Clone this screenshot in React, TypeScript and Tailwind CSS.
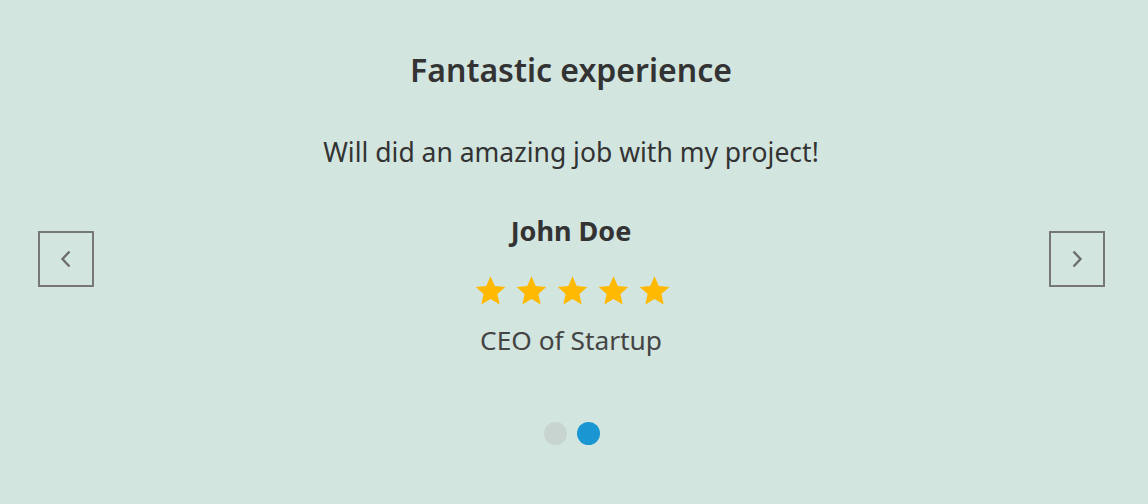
import React from "react";

const Star = () => (
  <svg width="33" height="33" viewBox="0 0 24 24" aria-hidden="true">
    <path
      fill="#ffb900"
      d="M12 1.6l3.1 7.1 7.7.7-5.8 5.1 1.7 7.6L12 18.1l-6.7 4 1.7-7.6-5.8-5.1 7.7-.7z"
    />
  </svg>
);

const NavButton = ({ dir }: { dir: "prev" | "next" }) => (
  <button
    type="button"
    aria-label={dir === "prev" ? "Previous" : "Next"}
    className="flex h-[56px] w-[56px] items-center justify-center border-2 border-[#777] bg-transparent"
  >
    <svg width="12" height="20" viewBox="0 0 12 20" fill="none" stroke="#6e6e6e" strokeWidth="2.4">
      {dir === "prev" ? <path d="M9.5 2.5 L2.5 10 L9.5 17.5" /> : <path d="M2.5 2.5 L9.5 10 L2.5 17.5" />}
    </svg>
  </button>
);

export default function App() {
  return (
    <div
      className="flex h-[504px] w-full items-center bg-[#d2e5df] text-[#333]"
      style={{ fontFamily: '"Noto Sans", "Open Sans", sans-serif' }}
    >
      <div className="flex w-[128px] justify-start pl-[38px] pt-[14px]">
        <NavButton dir="prev" />
      </div>
      <div className="flex flex-1 flex-col items-center self-stretch pt-[44px]">
        <h2 className="text-[32px] font-semibold leading-[52px]">Fantastic experience</h2>
        <p className="mt-[38px] text-[26.5px] leading-[36px]">Will did an amazing job with my project!</p>
        <p className="mt-[43px] text-[27px] font-bold leading-[36px]">John Doe</p>
        <div className="mt-[25px] flex gap-[8px] pl-[2px]">
          <Star />
          <Star />
          <Star />
          <Star />
          <Star />
        </div>
        <p className="mt-[15px] text-[26.3px] leading-[36px] text-[#444]">CEO of Startup</p>
        <div className="mt-[64px] flex gap-[10px] pl-[2px]">
          <span className="h-[23px] w-[23px] rounded-full bg-[#c8d4d0]" />
          <span className="h-[23px] w-[23px] rounded-full bg-[#1a96d2]" />
        </div>
      </div>
      <div className="flex w-[134px] justify-end pr-[43px] pt-[14px]">
        <NavButton dir="next" />
      </div>
    </div>
  );
}
